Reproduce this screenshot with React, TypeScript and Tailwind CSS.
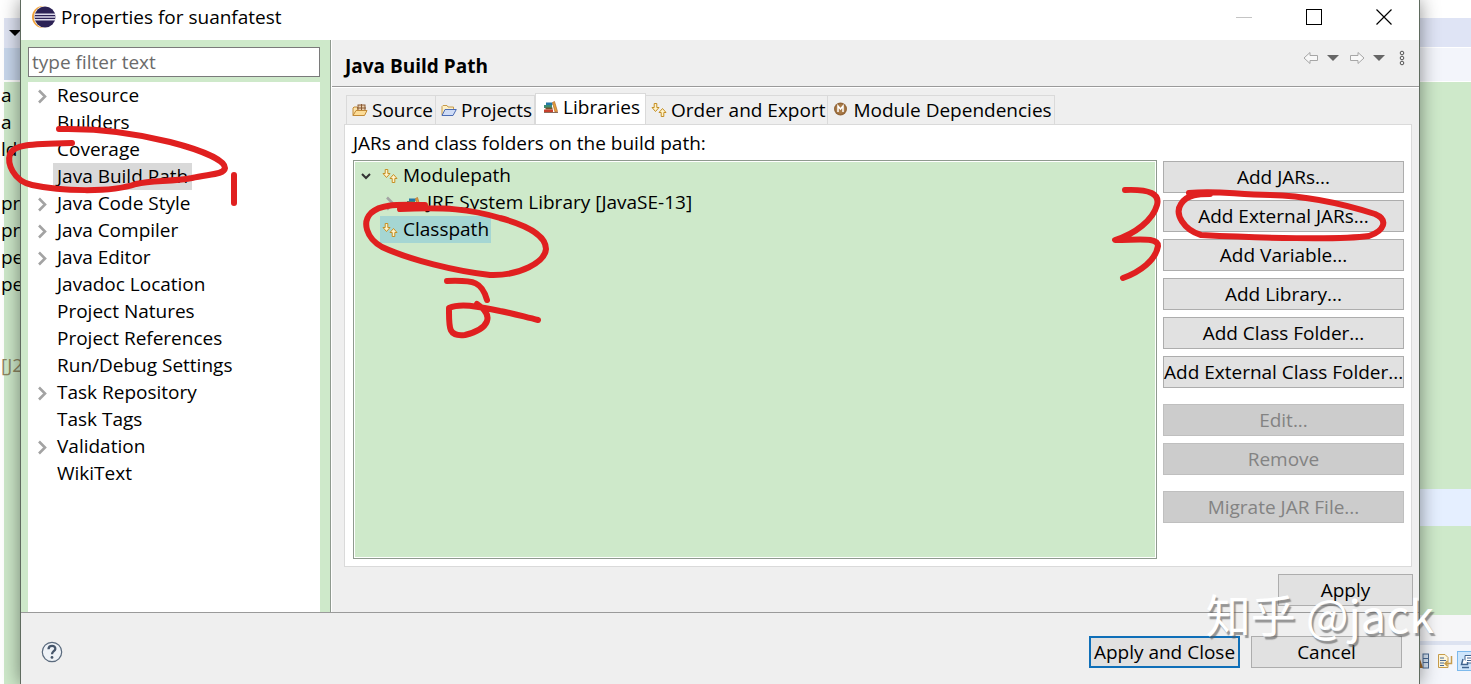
import { useState, type ReactNode } from "react";

interface TreeEntry {
  label: string;
  expandable?: boolean;
}

const pages: TreeEntry[] = [
  { label: "Resource", expandable: true },
  { label: "Builders" },
  { label: "Coverage" },
  { label: "Java Build Path" },
  { label: "Java Code Style", expandable: true },
  { label: "Java Compiler", expandable: true },
  { label: "Java Editor", expandable: true },
  { label: "Javadoc Location" },
  { label: "Project Natures" },
  { label: "Project References" },
  { label: "Run/Debug Settings" },
  { label: "Task Repository", expandable: true },
  { label: "Task Tags" },
  { label: "Validation", expandable: true },
  { label: "WikiText" },
];

const buttonGroups: { disabled: boolean; labels: string[] }[] = [
  {
    disabled: false,
    labels: ["Add JARs...", "Add External JARs...", "Add Variable...", "Add Library...", "Add Class Folder...", "Add External Class Folder..."],
  },
  { disabled: true, labels: ["Edit...", "Remove"] },
  { disabled: true, labels: ["Migrate JAR File..."] },
];

const editorLines = ["a", "a", "ld", "", "pro", "pr", "pe", "per", "", "", "[J2"];

function EclipseLogo() {
  return (
    <svg className="w-6 h-6 shrink-0" viewBox="0 0 24 24">
      <circle cx="11" cy="12" r="11" fill="#f0a33c" />
      <circle cx="13" cy="12" r="11" fill="#fff" />
      <circle cx="13" cy="12" r="10.5" fill="#2c2255" />
      <path d="M2.8 9.3h20.400M2.500 12h21M2.800 14.700h20.400" stroke="#dcd9ea" strokeWidth="1.4" />
    </svg>
  );
}

function SourceIcon() {
  return (
    <svg className="w-4 h-4 shrink-0" viewBox="0 0 16 16">
      <path d="M1 13.5V6L2 5H5L6 6V13.5Z" fill="#fbe3ac" stroke="#c28a36" />
      <rect x="6" y="3" width="7" height="6" fill="#ead2b0" stroke="#8a5a34" />
      <path d="M9.5 2v7M5 6h9" stroke="#8a5a34" />
      <path d="M1 13.5L4 8.5H15L12.5 13.5Z" fill="#fcdc97" stroke="#c28a36" />
    </svg>
  );
}

function ProjectsIcon() {
  return (
    <svg className="w-4 h-4 shrink-0" viewBox="0 0 16 16">
      <path d="M1 13V4.5L2 3.5H6L7 5H12.5V7.5" fill="#fdf0c8" stroke="#c69a4a" />
      <path d="M1 13.5L4 7.5H15.3L12 13.5Z" fill="#cfdcf6" stroke="#4c6cb3" />
    </svg>
  );
}

function LibraryIcon() {
  return (
    <svg className="w-4 h-4 shrink-0" viewBox="0 0 16 16">
      <rect x="3" y="3.5" width="6.5" height="2.5" fill="#2277a8" />
      <rect x="1" y="6" width="8" height="3" fill="#3d8c73" />
      <rect x="2.5" y="8.5" width="7" height="2" fill="#76542b" />
      <rect x="1" y="10.5" width="9" height="2.5" fill="#c7402c" />
      <path d="M9.5 3.5L11.5 2.5L14.5 12.5L12 13Z" fill="#e4a33c" stroke="#b5652a" strokeWidth=".7" />
      <path d="M1 13.5H15" stroke="#6e4a36" strokeWidth=".8" />
    </svg>
  );
}

function OrderIcon() {
  return (
    <svg className="w-4 h-4 shrink-0" viewBox="0 0 16 16" fill="#fff3c9" stroke="#c58f24" strokeLinejoin="round">
      <path d="M3.2 1.5H5.8V5.5H8L4.5 9.5L1 5.5H3.2Z" />
      <path d="M10.2 14.5H12.8V10.5H15L11.5 6.5L8 10.5H10.2Z" />
    </svg>
  );
}

function ModuleIcon() {
  return (
    <svg className="w-4 h-4 shrink-0" viewBox="0 0 16 16">
      <circle cx="7.5" cy="7" r="6.5" fill="#94673a" />
      <circle cx="7.5" cy="7" r="5" fill="#a97b48" />
      <path d="M5 10V4L7.5 7L10 4V10" fill="none" stroke="#fff" strokeWidth="1.5" />
    </svg>
  );
}

function Chevron({ open }: { open?: boolean }) {
  return open ? (
    <svg className="w-4 h-4 shrink-0" viewBox="0 0 16 16" fill="none" stroke="#333" strokeWidth="2">
      <path d="M4 6L8 10L12 6" />
    </svg>
  ) : (
    <svg className="w-4 h-4 shrink-0" viewBox="0 0 16 16" fill="none" stroke="#a3a3a3" strokeWidth="2.6">
      <path d="M5 2.5L11 8.5L5 14.5" />
    </svg>
  );
}

function PushButton({ children, disabled, primary, className = "" }: { children: ReactNode; disabled?: boolean; primary?: boolean; className?: string }) {
  return (
    <button
      disabled={disabled}
      className={`h-8 leading-7 text-center whitespace-nowrap ${primary ? "border-2 border-[#0f6fb8]" : "border"} ${
        disabled ? "bg-[#cccccc] border-[#bfbfbf] text-[#838383]" : primary ? "bg-[#e1e1e1]" : "bg-[#e1e1e1] border-[#adadad]"
      } ${className}`}
    >
      {children}
    </button>
  );
}

const tabs: { label: string; icon: ReactNode }[] = [
  { label: "Source", icon: <SourceIcon /> },
  { label: "Projects", icon: <ProjectsIcon /> },
  { label: "Libraries", icon: <LibraryIcon /> },
  { label: "Order and Export", icon: <OrderIcon /> },
  { label: "Module Dependencies", icon: <ModuleIcon /> },
];

function TitleBar() {
  return (
    <header className="flex items-center h-10 bg-white pl-[11px] pr-[27px] pb-[6px]">
      <EclipseLogo />
      <h1 className="ml-[5px] leading-7">Properties for suanfatest</h1>
      <div className="ml-auto flex items-center gap-[54px]">
        <button aria-label="Minimize">
          <svg className="w-4 h-4" viewBox="0 0 16 16"><path d="M0 8.5H16" stroke="#c4c4c4" /></svg>
        </button>
        <button aria-label="Maximize">
          <svg className="w-4 h-4" viewBox="0 0 16 16"><rect x=".5" y=".5" width="15" height="15" fill="none" stroke="#000" /></svg>
        </button>
        <button aria-label="Close">
          <svg className="w-4 h-4" viewBox="0 0 16 16"><path d="M.5 .5L15.5 15.5M15.5 .5L.5 15.5" stroke="#000" strokeWidth="1.2" /></svg>
        </button>
      </div>
    </header>
  );
}

function Sidebar({ page, onSelect }: { page: string; onSelect: (label: string) => void }) {
  return (
    <nav className="w-[310px] shrink-0 flex flex-col bg-[#cee9ca] border-r border-[#8f9a8f] pl-[7px] pr-[10px] pt-[7px]">
      <input
        type="text"
        aria-label="Filter"
        placeholder="type filter text"
        className="w-full h-[30px] px-[3px] bg-white border border-[#7a7a7a] placeholder:text-[#6b6b6b] outline-none"
      />
      <ul className="mt-[5px] flex-1 bg-white pl-[6px]">
        {pages.map((p) => (
          <li key={p.label} className="flex items-center h-[27px]">
            <span className="w-[19px] h-4">{p.expandable && <Chevron />}</span>
            <button onClick={() => onSelect(p.label)} className={`h-[27px] px-1 leading-[27px] ${page === p.label ? "bg-[#d9d9d9]" : ""}`}>
              {p.label}
            </button>
          </li>
        ))}
      </ul>
    </nav>
  );
}

function HistoryToolbar() {
  return (
    <div className="flex items-center gap-2 pt-2 self-start">
      <button aria-label="Back">
        <svg className="w-4 h-5" viewBox="0 0 16 20"><path d="M1 10L7 4.5V7.5H14.5V12.5H7V15.5Z" fill="#f8f8f8" stroke="#a6a6a6" /></svg>
      </button>
      <button aria-label="Back history">
        <svg className="w-3 h-5" viewBox="0 0 12 20"><path d="M0 7H12L6 13Z" fill="#666" /></svg>
      </button>
      <button aria-label="Forward" className="ml-[2px]">
        <svg className="w-4 h-5" viewBox="0 0 16 20"><path d="M15 10L9 4.5V7.5H1.5V12.5H9V15.5Z" fill="#f8f8f8" stroke="#a6a6a6" /></svg>
      </button>
      <button aria-label="Forward history">
        <svg className="w-3 h-5" viewBox="0 0 12 20"><path d="M0 7H12L6 13Z" fill="#666" /></svg>
      </button>
      <button aria-label="View menu" className="ml-[3px]">
        <svg className="w-3 h-5" viewBox="0 0 12 20" fill="none" stroke="#555">
          <circle cx="6" cy="5" r="1.8" />
          <circle cx="6" cy="10" r="1.8" />
          <circle cx="6" cy="15" r="1.8" />
        </svg>
      </button>
    </div>
  );
}

function LibrariesPanel() {
  return (
    <div className="flex-1 flex flex-col bg-white border border-[#dadada] mr-px pl-2 pr-[7px] pb-[7px]">
      <p className="leading-9 h-[35px]">JARs and class folders on the build path:</p>
      <div className="flex-1 flex gap-[6px]">
        <ul className="flex-1 border border-[#8f9a8f] bg-[#cee9ca] outline-1 -outline-offset-2 outline-white pt-px pl-1">
          <li className="flex items-center h-[27px]">
            <Chevron open />
            <span className="flex items-center gap-[5px] ml-2"><OrderIcon />Modulepath</span>
          </li>
          <li className="flex items-center h-[27px] pl-6">
            <Chevron />
            <span className="flex items-center gap-[5px] ml-2"><LibraryIcon />JRE System Library [JavaSE-13]</span>
          </li>
          <li className="flex items-center h-[27px] pl-[22px]">
            <span className="flex items-center gap-[5px] h-[27px] px-[2px] bg-[#a5d6d3]"><OrderIcon />Classpath</span>
          </li>
        </ul>
        <div className="w-[241px] flex flex-col gap-4 pt-px">
          {buttonGroups.map((group) => (
            <div key={group.labels[0]} className="flex flex-col gap-[7px]">
              {group.labels.map((label) => (
                <PushButton key={label} disabled={group.disabled}>{label}</PushButton>
              ))}
            </div>
          ))}
        </div>
      </div>
    </div>
  );
}

function BuildPathPage() {
  const [tab, setTab] = useState("Libraries");
  return (
    <main className="flex-1 flex flex-col bg-[#efefef] border-l border-white">
      <div className="flex items-center h-[47px] border-b border-[#9a9a9a] pl-[13px] pr-[11px]">
        <h2 className="flex-1 font-bold leading-7 pt-[6px]">Java Build Path</h2>
        <HistoryToolbar />
      </div>
      <div className="flex-1 flex flex-col border-t border-white pl-3 pr-[6px] pt-[5px] pb-[6px]">
        <div className="flex items-end pl-[2px] h-[31px]" role="tablist">
          {tabs.map((t) => (
            <button
              key={t.label}
              role="tab"
              aria-selected={tab === t.label}
              onClick={() => setTab(t.label)}
              className={`flex items-center gap-1 border-[#dadada] whitespace-nowrap ${
                tab === t.label ? "h-[31px] pl-[7px] pr-[5px] pb-1 bg-white border-x border-t" : "h-[29px] pl-[5px] pr-[2px] border-r border-t first:border-l"
              }`}
            >
              {t.icon}
              {t.label}
            </button>
          ))}
        </div>
        <LibrariesPanel />
        <div className="flex justify-end pt-[7px]">
          <PushButton className="w-[135px]">Apply</PushButton>
        </div>
      </div>
    </main>
  );
}

function DialogFooter() {
  return (
    <footer className="flex items-center h-[72px] bg-[#efefef] border-t border-[#9a9a9a] pl-5 pr-[17px] pt-[7px]">
      <button aria-label="Help">
        <svg className="w-[22px] h-[22px]" viewBox="0 0 22 22">
          <circle cx="11" cy="11" r="9.7" fill="#eef2f7" stroke="#5a6a7d" strokeWidth="1.2" />
          <path d="M7.5 8.2C7.7 3.6 14.7 4 14.3 8C14 10.2 11 10.5 11 13.2" fill="none" stroke="#46566b" strokeWidth="2.3" />
          <circle cx="11" cy="16.4" r="1.4" fill="#46566b" />
        </svg>
      </button>
      <div className="ml-auto flex gap-[11px]">
        <PushButton primary className="w-[151px]">Apply and Close</PushButton>
        <PushButton className="w-[151px]">Cancel</PushButton>
      </div>
    </footer>
  );
}

// Slivers of the workbench visible on both sides of the dialog
function WorkbenchLeft() {
  return (
    <div className="w-5 shrink-0 flex flex-col overflow-hidden bg-[#cee9ca]">
      <div className="h-[18px] bg-white" />
      <div className="h-[30px] bg-[#dfe4f3] border-l-4 border-white flex items-center justify-end">
        <svg className="w-3 h-2 shrink-0" viewBox="0 0 12 8"><path d="M1 1H13L7 7Z" fill="#000" /></svg>
      </div>
      <div className="h-8 bg-[#c8d7ec] border-l-4 border-white" />
      <div className="h-[2px] bg-white" />
      <div className="flex-1 border-l-4 border-white">
        {editorLines.map((line, i) => (
          <div key={i} className={`h-[27px] leading-[27px] -ml-[3px] whitespace-nowrap ${line === "[J2" ? "text-[#8c8560]" : ""}`}>
            {line}
          </div>
        ))}
      </div>
    </div>
  );
}

function WorkbenchRight() {
  return (
    <div className="w-[51px] shrink-0 flex flex-col overflow-hidden bg-[#cee9ca]">
      <div className="h-[18px] bg-white" />
      <div className="h-[29px] bg-[#dfe4f5]" />
      <div className="h-[35px] bg-[#f3f5fb] border-y border-white" />
      <div className="flex-1" />
      <div className="h-[37px] bg-[#e5efff]" />
      <div className="h-[89px]" />
      <div className="h-[26px] bg-[#f6f6f8]" />
      <div className="h-[43px] bg-[#f4f6fb] border-t-4 border-[#dde3f1] pb-2 flex items-center gap-2 overflow-hidden">
        <svg className="w-[9px] h-4 shrink-0" viewBox="0 0 9 16">
          <rect x="3" y="1" width="5.5" height="14" fill="#d7e4f4" stroke="#4a6a94" />
          <path d="M3 5.5H8M3 9.5H8" stroke="#4a6a94" />
          <path d="M0 6L3 15H0Z" fill="#a06a2c" />
        </svg>
        <svg className="w-4 h-4 shrink-0" viewBox="0 0 16 16" fill="none">
          <path d="M1.5 1.5H8L11 4.5V14.5H1.5Z" fill="#fdf6dd" stroke="#c79d4b" />
          <path d="M3 5h4M3 7.5h6M3 10h4M3 12.5h4" stroke="#4a6a94" />
          <path d="M14.5 3V10.5H8M10.5 8L8 10.5L10.5 13" stroke="#c79d4b" strokeWidth="1.5" />
        </svg>
        <span className="-ml-1 w-5 h-5 shrink-0 bg-[#cfe6fb] border border-[#7db9ec] flex items-center">
          <svg className="w-4 h-4 shrink-0" viewBox="0 0 16 16" fill="#fff" stroke="#41658f">
            <path d="M7 2.5H15.5V10H7Z" />
            <path d="M9 5h6M9 7.5h6" />
            <path d="M5 6L3.5 11.5H9.5V9M4 14.5H11" strokeWidth="1.5" />
          </svg>
        </span>
      </div>
    </div>
  );
}

function LeftScribbles() {
  return (
    <svg
      className="absolute left-0 top-0 w-[560px] h-[350px] pointer-events-none"
      viewBox="0 0 560 350"
      fill="none"
      stroke="#e02020"
      strokeWidth="6"
      strokeLinecap="round"
      strokeLinejoin="round"
    >
      <path d="M59 129C100 128 135 133 170 142C205 151 225 161 225 168C224 175 208 174 192 178C170 182 152 180 136 184C110 193 60 191 32 185C13 181 7 163 10 154C14 145 27 144 72 143" />
      <path d="M234 175V203" />
      <path d="M400 209C445 207 470 209 500 218C530 226 546 237 546 249C545 262 520 276 490 275C455 271 410 260 382 247C366 238 362 222 371 213C382 203 400 205 425 205" />
      <path d="M447 281C475 280 482 282 487 300" />
      <path d="M477 304C495 316 489 329 465 335C448 337 449 328 449 308C460 303 476 306 500 311C512 313 525 317 538 320" />
    </svg>
  );
}

function RightScribbles() {
  return (
    <svg
      className="absolute right-0 top-0 w-[371px] h-[350px] pointer-events-none"
      viewBox="1100 0 371 350"
      fill="none"
      stroke="#e02020"
      strokeWidth="6"
      strokeLinecap="round"
      strokeLinejoin="round"
    >
      <path d="M1125 190C1150 189 1160 194 1157 205C1153 220 1135 234 1115 240C1140 240 1158 237 1158 246C1156 260 1140 272 1123 278" />
      <path d="M1189 193C1220 190 1235 195 1270 195C1315 196 1350 206 1375 214C1389 220 1384 231 1369 236C1340 240 1260 238 1201 235C1184 230 1174 214 1181 204C1187 194 1200 194 1210 194" />
    </svg>
  );
}

export default function App() {
  const [page, setPage] = useState("Java Build Path");
  return (
    <div className="relative flex min-h-screen overflow-hidden bg-white text-black text-[19px] font-['Open_Sans','Noto_Sans_CJK_SC',sans-serif]">
      <WorkbenchLeft />
      <div className="relative flex-1 flex flex-col border-x border-[#5f6b5f] shadow-[0_0_18px_rgba(0,0,0,0.45)]">
        <TitleBar />
        <div className="flex-1 flex">
          <Sidebar page={page} onSelect={setPage} />
          <BuildPathPage />
        </div>
        <DialogFooter />
      </div>
      <WorkbenchRight />
      <LeftScribbles />
      <RightScribbles />
      <div className="absolute right-[37px] bottom-[42px] text-[45px] leading-[56px] text-white [text-shadow:2px_3px_1px_rgba(90,90,90,0.6)] pointer-events-none whitespace-nowrap font-['Noto_Sans_CJK_SC',sans-serif]">
        知乎 @jack
      </div>
    </div>
  );
}
